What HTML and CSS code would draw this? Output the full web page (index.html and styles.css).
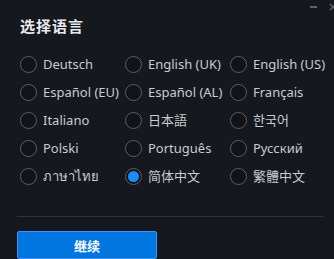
FILE: index.html
```html
<!DOCTYPE html>
<html>
<head>
<meta charset="utf-8">
<link rel="stylesheet" href="styles.css">
</head>
<body>
<div class="dialog">
  <div class="winctl">
    <span class="min"></span>
    <svg class="close" width="8" height="8" viewBox="0 0 8 8"><path d="M1 1L7 7M7 1L1 7" stroke="#5f636b" stroke-width="1.3"/></svg>
  </div>
  <h1 class="title">选择语言</h1>
  <div class="grid">
    <label class="opt"><span class="radio"></span><span class="lbl">Deutsch</span></label>
    <label class="opt"><span class="radio"></span><span class="lbl">English (UK)</span></label>
    <label class="opt"><span class="radio"></span><span class="lbl">English (US)</span></label>
    <label class="opt"><span class="radio"></span><span class="lbl">Español (EU)</span></label>
    <label class="opt"><span class="radio"></span><span class="lbl">Español (AL)</span></label>
    <label class="opt"><span class="radio"></span><span class="lbl">Français</span></label>
    <label class="opt"><span class="radio"></span><span class="lbl">Italiano</span></label>
    <label class="opt"><span class="radio"></span><span class="lbl cjk">日本語</span></label>
    <label class="opt"><span class="radio"></span><span class="lbl cjk">한국어</span></label>
    <label class="opt"><span class="radio"></span><span class="lbl">Polski</span></label>
    <label class="opt"><span class="radio"></span><span class="lbl">Português</span></label>
    <label class="opt"><span class="radio"></span><span class="lbl">Русский</span></label>
    <label class="opt"><span class="radio"></span><span class="lbl">ภาษาไทย</span></label>
    <label class="opt"><span class="radio checked"></span><span class="lbl cjk">简体中文</span></label>
    <label class="opt"><span class="radio"></span><span class="lbl cjk">繁體中文</span></label>
  </div>
  <div class="divider"></div>
  <button class="btn">继续</button>
</div>
</body>
</html>
```
FILE: styles.css
```css
html, body {
  margin: 0;
  padding: 0;
  background: #15181f;
}
.dialog {
  position: relative;
  width: 334px;
  height: 259px;
  box-sizing: border-box;
  padding: 16px 10px 0 17px;
  overflow: hidden;
  font-family: "Noto Sans", "Noto Sans CJK SC", sans-serif;
  color: #c9cbce;
}
.winctl {
  position: absolute;
  top: 3px;
  right: -3px;
  display: flex;
  align-items: center;
  gap: 12px;
}
.min {
  width: 7px;
  height: 2px;
  background: #5f636b;
}
.title {
  margin: 0 0 0 3px;
  font-family: "Noto Sans CJK SC", sans-serif;
  font-size: 15px;
  font-weight: 700;
  line-height: 20px;
  color: #e8e9eb;
  letter-spacing: 1px;
}
.grid {
  margin-top: 14px;
  margin-left: 3px;
  display: grid;
  grid-template-columns: 105px 105px 90px;
  grid-auto-rows: 28px;
}
.opt {
  display: flex;
  align-items: center;
  gap: 6px;
}
.radio {
  width: 15px;
  height: 15px;
  border: 1.5px solid #5d6066;
  border-radius: 50%;
  background: #111319;
  flex: none;
  display: flex;
  align-items: center;
  justify-content: center;
}
.radio.checked::after {
  content: "";
  width: 11px;
  height: 11px;
  border-radius: 50%;
  background: #1a8cff;
}
.lbl {
  font-size: 13px;
  line-height: 18px;
  white-space: nowrap;
}
.cjk {
  font-family: "Noto Sans CJK SC", "Noto Sans CJK KR", sans-serif;
  font-size: 13px;
}
.divider {
  margin-top: 26px;
  height: 1px;
  width: 307px;
  background: #2f333a;
}
.btn {
  display: block;
  margin-top: 14px;
  width: 140px;
  height: 28px;
  background: #0077e0;
  border: 1.5px solid #3b94f2;
  border-radius: 2px;
  color: #ffffff;
  font-family: "Noto Sans CJK SC", sans-serif;
  font-size: 13px;
  font-weight: 700;
  padding: 0;
}
```
